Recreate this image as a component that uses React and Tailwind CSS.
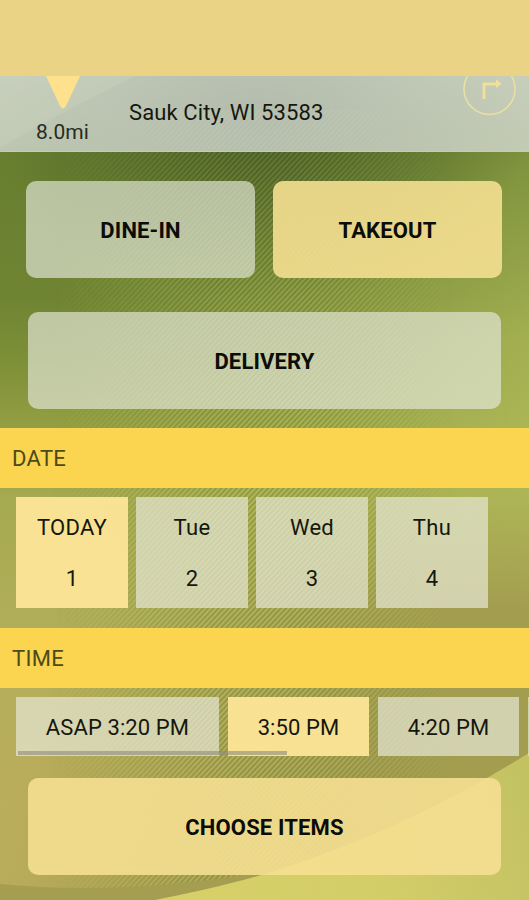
import React from "react";

function Backdrop() {
  return (
    <svg className="absolute inset-0 -z-10 h-full w-full" viewBox="0 0 529 900" aria-hidden="true">
      <defs>
        <linearGradient id="base" x1="0" y1="0" x2="0" y2="900" gradientUnits="userSpaceOnUse">
          <stop offset="0.08" stopColor="#82955e" />
          <stop offset="0.17" stopColor="#687f30" />
          <stop offset="0.33" stopColor="#6f8433" />
          <stop offset="0.4" stopColor="#7d8f37" />
          <stop offset="0.47" stopColor="#929e42" />
          <stop offset="0.55" stopColor="#a5a94f" />
          <stop offset="0.68" stopColor="#b0ae59" />
          <stop offset="0.85" stopColor="#b9ad5c" />
          <stop offset="1" stopColor="#bcae5c" />
        </linearGradient>
        <linearGradient id="rightGlow" x1="0" y1="0" x2="529" y2="0" gradientUnits="userSpaceOnUse">
          <stop offset="0.1" stopColor="#b4be5c" stopOpacity="0" />
          <stop offset="1" stopColor="#b4be5c" stopOpacity="0.72" />
        </linearGradient>
        <linearGradient id="glowFade" x1="0" y1="130" x2="0" y2="340" gradientUnits="userSpaceOnUse">
          <stop offset="0" stopColor="#555" />
          <stop offset="1" stopColor="#fff" />
        </linearGradient>
        <mask id="glowMask">
          <rect width="529" height="900" fill="url(#glowFade)" />
        </mask>
        <radialGradient id="shade" gradientUnits="userSpaceOnUse" cx="0" cy="0" r="1" gradientTransform="translate(260 125) scale(270 175)">
          <stop offset="0" stopColor="#384f20" stopOpacity="0.9" />
          <stop offset="0.3" stopColor="#3e5522" stopOpacity="0.66" />
          <stop offset="1" stopColor="#4b6526" stopOpacity="0" />
        </radialGradient>
        <linearGradient id="olive" x1="140" y1="560" x2="400" y2="700" gradientUnits="userSpaceOnUse">
          <stop offset="0" stopColor="#a19b4e" stopOpacity="0" />
          <stop offset="1" stopColor="#a19b4e" stopOpacity="0.9" />
        </linearGradient>
        <linearGradient id="oliveFade" x1="0" y1="480" x2="0" y2="610" gradientUnits="userSpaceOnUse">
          <stop offset="0" stopColor="#000" />
          <stop offset="1" stopColor="#fff" />
        </linearGradient>
        <mask id="oliveMask">
          <rect width="529" height="900" fill="url(#oliveFade)" />
        </mask>
        <linearGradient id="leaf" x1="200" y1="900" x2="529" y2="800" gradientUnits="userSpaceOnUse">
          <stop offset="0" stopColor="#d7d068" />
          <stop offset="0.5" stopColor="#d4ce69" />
          <stop offset="1" stopColor="#c3c263" />
        </linearGradient>
        <linearGradient id="stripeFade" x1="50" y1="0" x2="490" y2="0" gradientUnits="userSpaceOnUse">
          <stop offset="0" stopColor="#000" />
          <stop offset="0.38" stopColor="#fff" />
          <stop offset="0.6" stopColor="#fff" />
          <stop offset="0.92" stopColor="#000" />
        </linearGradient>
        <mask id="stripeMask">
          <rect width="529" height="900" fill="url(#stripeFade)" />
        </mask>
        <pattern id="stripes" width="3.8" height="8" patternUnits="userSpaceOnUse" patternTransform="rotate(43)">
          <rect width="1.6" height="8" fill="#55651c" fillOpacity="0.3" />
          <rect x="1.9" width="1.6" height="8" fill="#d0d97a" fillOpacity="0.2" />
        </pattern>
      </defs>
      <rect width="529" height="900" fill="url(#base)" />
      <rect width="529" height="900" fill="url(#rightGlow)" mask="url(#glowMask)" />
      <rect width="529" height="420" fill="url(#shade)" />
      <path d="M0 76H135C95 96 50 118 0 148Z" fill="#bfd27d" fillOpacity="0.25" />
      <rect y="480" width="529" height="420" fill="url(#olive)" mask="url(#oliveMask)" />
      <rect y="110" width="529" height="790" fill="url(#stripes)" mask="url(#stripeMask)" />
      <path d="M0 884C100 894 195 884 290 868V900H0Z" fill="#a59e50" />
      <path d="M529 753C450 802 370 841 265 874C228 885 190 893 155 900H529Z" fill="url(#leaf)" />
    </svg>
  );
}

function BigButton({ selected, className, children }) {
  return (
    <button
      className={`flex h-[97px] items-center justify-center rounded-[10px] pt-[3px] text-[22px] font-bold tracking-[0.15px] text-[#0c0c08] ${
        selected ? "bg-[#f5df91]/90" : "bg-[#e4e7da]/67"
      } ${className}`}
    >
      {children}
    </button>
  );
}

function SectionTitle({ children }) {
  return (
    <h2 className="flex h-[60px] items-center bg-[#fbd450] pt-[2px] pl-[12px] text-[22px] tracking-[0.35px] text-[#4d4a1b]">
      {children}
    </h2>
  );
}

const days = [
  ["TODAY", "1"],
  ["Tue", "2"],
  ["Wed", "3"],
  ["Thu", "4"],
];

export default function App() {
  return (
    <main className="relative isolate flex h-[900px] w-[529px] flex-col overflow-hidden font-['Roboto',sans-serif] text-[22px] leading-[26px] tracking-[0.1px] text-[#15170f]">
      <Backdrop />
      <header className="h-[76px] shrink-0 bg-[#ead384]" />

      <section className="flex h-[76px] shrink-0 overflow-hidden border-b border-[#c6cfad] bg-[#d9dddb]/75">
        <div className="flex w-[125px] flex-col items-center">
          <svg width="34" height="33" viewBox="0 0 34 33" aria-hidden="true">
            <path d="M0 0H34L20 30Q17 35 14 30Z" fill="#fde18c" />
          </svg>
          <span className="mt-[10px] text-[21px] text-[#282b20]">8.0mi</span>
        </div>
        <p className="ml-[4px] mt-[24px] grow">Sauk City, WI 53583</p>
        <svg className="mr-[13px]" width="53" height="41" viewBox="0 0 53 41" fill="none" aria-hidden="true">
          <circle cx="26.5" cy="13" r="25.5" stroke="#e9e0a2" strokeWidth="1.6" />
          <path d="M21 23V8H34" stroke="#f0e098" strokeWidth="2.8" />
          <path d="M33 3L38.500 8L33 12Z" fill="#f0e098" />
        </svg>
      </section>

      <div className="mt-[29px] flex shrink-0 gap-[18px] px-[26px]">
        <BigButton className="w-[229px]">DINE-IN</BigButton>
        <BigButton className="w-[229px]" selected>TAKEOUT</BigButton>
      </div>
      <BigButton className="mx-[28px] mt-[34px] shrink-0">DELIVERY</BigButton>

      <div className="mt-[19px] shrink-0">
        <SectionTitle>DATE</SectionTitle>
        <div className="mt-[9px] flex gap-2 pl-4">
          {days.map(([name, number], i) => (
            <button
              key={name}
              className={`flex h-[111px] w-[112px] flex-col items-center gap-[25px] pt-[18px] tracking-[0.3px] ${
                i === 0 ? "bg-[#fde597]/95" : "bg-[#e9eadb]/67"
              }`}
            >
              <span>{name}</span>
              <span>{number}</span>
            </button>
          ))}
        </div>
      </div>

      <div className="mt-[20px] shrink-0">
        <SectionTitle>TIME</SectionTitle>
        <div className="relative mt-[9px] flex h-[59px] gap-[9px] overflow-hidden pl-4">
          <button className="w-[203px] shrink-0 bg-[#e9eadb]/67 pt-[2px]">ASAP 3:20 PM</button>
          <button className="w-[141px] shrink-0 bg-[#fde597]/95 pt-[2px]">3:50 PM</button>
          <button className="w-[141px] shrink-0 bg-[#e9eadb]/67 pt-[2px]">4:20 PM</button>
          <div className="grow bg-[#e9eadb]/67" />
          <div className="absolute bottom-[1px] left-[18px] h-[4px] w-[269px] bg-[#8c8a7c]/60" />
        </div>
      </div>

      <BigButton className="mx-[28px] mt-[22px] shrink-0" selected>CHOOSE ITEMS</BigButton>
    </main>
  );
}
